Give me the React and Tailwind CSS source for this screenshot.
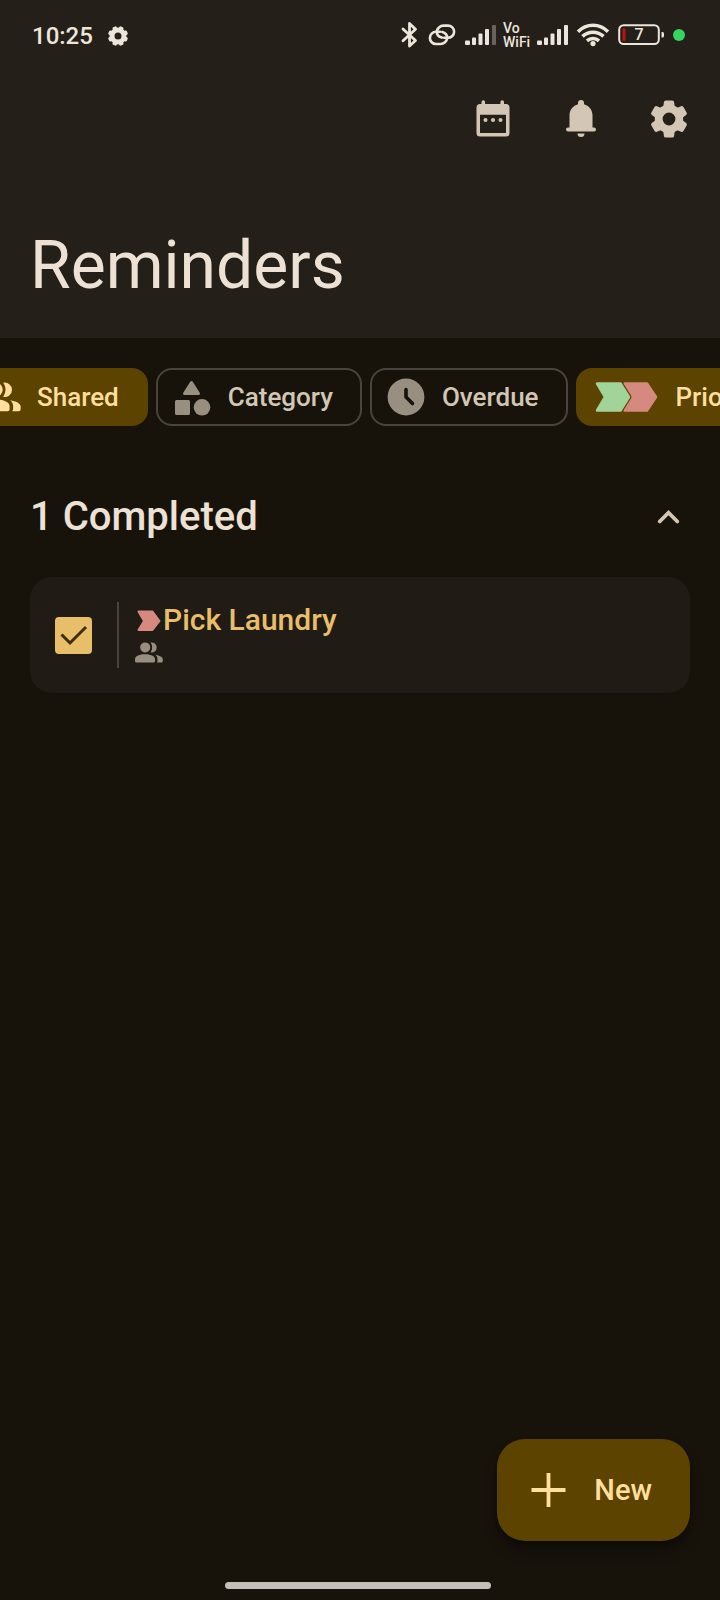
import React, { useState } from "react";

function PeopleIcon({ className }) {
  return (
    <svg viewBox="0 0 28 21" className={className} fill="currentColor" aria-hidden="true">
      <circle cx="10.2" cy="5.4" r="5" />
      <path d="M0 17c0-3.3 5-4.8 10-4.8S20 13.700 20 17v2a1.500 1.500 0 0 1-1.500 1.500h-17A1.500 1.500 0 0 1 0 19z" />
      <path d="M15.500.6a5 5 0 1 1 0 9.700c2.200-2.900 2.200-6.800 0-9.700z" />
      <path d="M20.500 12.800c4 .7 7.300 2.200 7.300 4.600v1.600a1.500 1.500 0 0 1-1.500 1.500H21.800c.5-.6.700-1.200.7-1.900V17c0-1.700-.7-3-2-4.200z" />
    </svg>
  );
}

function SmallGear() {
  return (
    <svg viewBox="0 0 20 20" className="h-5 w-5" aria-hidden="true">
      <circle cx="10" cy="10" r="6" fill="none" stroke="currentColor" strokeWidth="5" />
      {[22.5, 67.5, 112.5, 157.5, 202.5, 247.5, 292.5, 337.5].map((a) => (
        <rect key={a} x="7.800" y="0" width="4.400" height="4" rx="1.200" fill="currentColor" transform={`rotate(${a} 10 10)`} />
      ))}
    </svg>
  );
}

function Gear() {
  return (
    <svg viewBox="0 0 44 44" className="h-11 w-11" fill="currentColor" aria-hidden="true">
      <circle cx="22" cy="22" r="10.300" fill="none" stroke="currentColor" strokeWidth="7.800" />
      {[0, 60, 120, 180, 240, 300].map((a) => (
        <path
          key={a}
          d="M18.800 3.500h6.400a1.900 1.900 0 0 1 1.900 1.600l.7 5.400 1.200 2.500H15l1.200-2.500.7-5.400a1.900 1.900 0 0 1 1.900-1.600z"
          transform={`rotate(${a} 22 22)`}
        />
      ))}
    </svg>
  );
}

function Signal({ dimLast }) {
  return (
    <svg viewBox="0 0 32 30" className="h-[30px] w-8" fill="currentColor" aria-hidden="true">
      <rect x="0" y="20.500" width="5" height="4.500" rx="1" />
      <rect x="7" y="17.500" width="4" height="7.500" rx="1" />
      <rect x="13.500" y="13.500" width="4" height="11.500" rx="1" />
      <rect x="20" y="9" width="4" height="16" rx="1" />
      <rect x="27" y="5" width="4" height="20" rx="1" opacity={dimLast ? 0.35 : 1} />
    </svg>
  );
}

function StatusBar() {
  return (
    <div className="flex h-[70px] items-center justify-between pr-[35px] pl-8 text-[#ece5db]">
      <div className="flex items-center gap-[15px] pt-0.5">
        <span className="text-[24px] leading-7 font-medium">10:25</span>
        <SmallGear />
      </div>
      <div className="flex items-center gap-1.5">
        <svg viewBox="0 0 19 30" className="h-[30px] w-[19px]" fill="none" stroke="currentColor" strokeWidth="2.800" strokeLinejoin="round" strokeLinecap="round" aria-hidden="true">
          <path d="M3 9 15.500 20.500 9.500 26V3.500l6 5.800L3 20.800" />
        </svg>
        <svg viewBox="0 0 34 30" className="h-[30px] w-[34px]" fill="none" stroke="currentColor" strokeWidth="2.600" strokeLinecap="round" aria-hidden="true">
          <path d="M19 17.800h4a6 6 0 0 0 0-12.200h-4.500c-3.500 0-6.300 3-6.600 5.500-.3 2.700 1.500 5.500 4.800 6.500" />
          <path d="M19 17.800h4a6 6 0 0 0 0-12.200h-4.500c-3.500 0-6.300 3-6.600 5.500-.3 2.700 1.500 5.500 4.800 6.500" transform="rotate(180 17 14.800)" />
        </svg>
        <Signal dimLast />
        <div className="w-7 text-[14px] leading-[14px] font-medium">
          <div>Vo</div>
          <div>WiFi</div>
        </div>
        <Signal />
        <svg viewBox="0 0 36 30" className="h-[30px] w-9" fill="none" stroke="currentColor" strokeWidth="3.600" aria-hidden="true">
          <path d="M3 11.700C11.500 3.100 24.500 3.100 33 11.700" />
          <path d="M7.500 16.400c5.800-5.600 15.200-5.600 21 0" />
          <path d="M12 20.800c3.400-3 8.600-3 12 0" />
          <circle cx="18" cy="23.600" r="2.600" fill="currentColor" stroke="none" />
        </svg>
        <div className="relative flex h-[30px] w-[50px] items-center">
          <svg viewBox="0 0 50 30" className="h-[30px] w-[50px]" aria-hidden="true">
            <rect x="2.200" y="5.200" width="39.600" height="18.800" rx="4.500" fill="none" stroke="currentColor" strokeWidth="2" />
            <rect x="5.500" y="8.500" width="3" height="12.500" rx="1" fill="#c01010" />
            <path d="M44.500 12h1a1.500 1.500 0 0 1 1.500 1.500v2.500a1.500 1.500 0 0 1-1.500 1.500h-1z" fill="currentColor" />
          </svg>
          <span className="absolute inset-0 pr-1.5 text-center text-[16px] leading-[30px] font-medium">7</span>
        </div>
        <span className="h-3 w-3 rounded-full bg-[#36d45f]" />
      </div>
    </div>
  );
}

function Chip({ selected, icon, children, className = "" }) {
  return (
    <button
      type="button"
      className={`flex h-[58px] shrink-0 items-center gap-[14px] rounded-2xl border-2 pr-[27px] pl-3 text-[26px] leading-8 font-medium ${
        selected ? "border-[#5c4300] bg-[#5c4300] text-[#ffdf9e]" : "border-[#4a453c] text-[#d3c6b4]"
      } ${className}`}
    >
      {icon}
      <span>{children}</span>
    </button>
  );
}

function Chips() {
  return (
    <div className="mt-[30px] flex gap-2 overflow-hidden">
      <Chip
        selected
        className="-ml-[35px]"
        icon={
          <span className="flex w-11 justify-center">
            <PeopleIcon className="h-[30px] w-10 shrink-0" />
          </span>
        }
      >
        Shared
      </Chip>
      <Chip
        icon={
          <svg viewBox="0 0 44 44" className="h-11 w-11 text-[#998f80]" fill="currentColor" stroke="currentColor" strokeWidth="3" strokeLinejoin="round" aria-hidden="true">
            <path d="M21.500 7.500 28.500 18.500h-14z" />
            <rect x="6.500" y="26.500" width="12" height="12" />
            <circle cx="32" cy="32.300" r="8.300" stroke="none" />
          </svg>
        }
      >
        Category
      </Chip>
      <Chip
        icon={
          <svg viewBox="0 0 44 44" className="h-11 w-11" aria-hidden="true">
            <circle cx="22" cy="22" r="18.400" fill="#998f80" />
            <path d="M22 14.500V22l6.500 6.500" fill="none" stroke="#17130b" strokeWidth="3.600" strokeLinecap="round" strokeLinejoin="round" />
          </svg>
        }
      >
        Overdue
      </Chip>
      <Chip
        selected
        icon={
          <svg viewBox="0 0 72 44" className="h-11 w-[72px]" strokeLinejoin="round" aria-hidden="true">
            <path d="M34.500 8.500H57L66 22 57 35.500H34.500L42 22z" fill="#d5897f" stroke="#d5897f" strokeWidth="2.500" />
            <path d="M7 8.500H30.500L39 22 30.500 35.500H7L15 22z" fill="#5c4300" stroke="#5c4300" strokeWidth="5" />
            <path d="M7 8.500H30.500L39 22 30.500 35.500H7L15 22z" fill="#a2d399" stroke="#a2d399" strokeWidth="2.500" />
          </svg>
        }
      >
        Priority
      </Chip>
    </div>
  );
}

function Task() {
  const [done, setDone] = useState(true);
  return (
    <li className="flex items-stretch rounded-[22px] bg-[#201b14] py-[25px] pl-[25px]">
      <label htmlFor="pick-laundry" aria-label="Pick Laundry" className="relative flex items-center">
        <input
          id="pick-laundry"
          type="checkbox"
          checked={done}
          onChange={() => setDone(!done)}
          className="peer h-[37px] w-[37px] appearance-none rounded border-2 border-[#e8be6a] checked:bg-[#e8be6a]"
        />
        <svg viewBox="0 0 37 37" className="pointer-events-none absolute hidden h-[37px] w-[37px] peer-checked:block" fill="none" stroke="#3d2d05" strokeWidth="3" aria-hidden="true">
          <path d="M6.500 17.500 15 26 31 10" />
        </svg>
      </label>
      <div className="ml-[25px] h-[66px] w-0.5 bg-[#4a453c]" />
      <div className="ml-4">
        <div className="flex items-center text-[#e8be6a]">
          <svg viewBox="0 0 28 24" className="h-6 w-7" strokeLinejoin="round" aria-hidden="true">
            <path d="M3.500 3.500H17.500L24.500 13 17.500 22H3.500L9 13z" fill="#d5897f" stroke="#d5897f" strokeWidth="2" />
          </svg>
          <span className="text-[30px] leading-9 font-medium">Pick Laundry</span>
        </div>
        <PeopleIcon className="mt-1 h-[21px] w-7 text-[#998f80]" />
      </div>
    </li>
  );
}

export default function App() {
  const iconButton = "flex h-[88px] w-[88px] items-center justify-center";
  return (
    <div className="flex min-h-screen flex-col bg-[#17130b] font-['Roboto',sans-serif]">
      <header className="bg-[#241f18] pb-9">
        <StatusBar />
        <nav className="mt-[5px] flex justify-end pr-[7px] text-[#d3c6b4]" aria-label="Actions">
          <button type="button" aria-label="Calendar" className={iconButton}>
            <svg viewBox="0 0 44 44" className="h-11 w-11" fill="currentColor" aria-hidden="true">
              <path fillRule="evenodd" d="M10.500 7V5a1.800 1.800 0 0 1 3.600 0v2h15.300V5a1.800 1.800 0 0 1 3.600 0v2H35a3.500 3.500 0 0 1 3.500 3.500v25.500A3.500 3.500 0 0 1 35 39.500H9A3.500 3.500 0 0 1 5.500 36V10.500A3.500 3.500 0 0 1 9 7zM9 17.700v18.300h26V17.700z" />
              <circle cx="14.500" cy="23" r="2" />
              <circle cx="22" cy="23" r="2" />
              <circle cx="29.500" cy="23" r="2" />
            </svg>
          </button>
          <button type="button" aria-label="Notifications" className={iconButton}>
            <svg viewBox="0 0 44 44" className="h-11 w-11" fill="currentColor" aria-hidden="true">
              <path d="M22 3a3 3 0 0 1 3 3v1.200c5 1.300 8.500 5.800 8.500 11V30.500H35a2 2 0 0 1 0 4H9a2 2 0 0 1 0-4h1.500V18.200c0-5.200 3.500-9.700 8.500-11V6a3 3 0 0 1 3-3z" />
              <path d="M18.500 36.500h7a3.500 3.500 0 0 1-7 0z" />
            </svg>
          </button>
          <button type="button" aria-label="Settings" className={iconButton}>
            <Gear />
          </button>
        </nav>
        <h1 className="mt-[67px] pl-[30px] text-[66px] leading-[72px] text-[#ece1d4]">Reminders</h1>
      </header>

      <Chips />

      <main className="px-[30px]">
        <button type="button" aria-expanded="true" className="mt-[51px] -mr-1 flex h-20 w-full items-center justify-between text-[#ece1d4]">
          <span className="text-[40px] leading-[48px] font-medium">1 Completed</span>
          <svg viewBox="0 0 44 44" className="h-11 w-11 text-[#d3c6b4]" fill="none" stroke="currentColor" strokeWidth="3.800" strokeLinecap="round" strokeLinejoin="miter" aria-hidden="true">
            <path d="m13.700 26.500 8.800-8.800 8.800 8.800" />
          </svg>
        </button>
        <ul className="mt-5">
          <Task />
        </ul>
      </main>

      <footer className="mt-auto flex flex-col items-center pb-[11px]">
        <button
          type="button"
          className="mr-[30px] flex h-[102px] items-center gap-6 self-end rounded-[28px] bg-[#5c4300] pr-[38px] pl-[29px] text-[29px] leading-9 font-medium text-[#ffdf9e] shadow-lg shadow-black/40"
        >
          <svg viewBox="0 0 44 44" className="h-11 w-11" fill="none" stroke="currentColor" strokeWidth="3.800" aria-hidden="true">
            <path d="M22.500 5v34M5.500 22h34" />
          </svg>
          New
        </button>
        <div className="mt-[41px] mr-1 h-[7px] w-[37%] rounded-full bg-[#c3bfb8]" />
      </footer>
    </div>
  );
}
